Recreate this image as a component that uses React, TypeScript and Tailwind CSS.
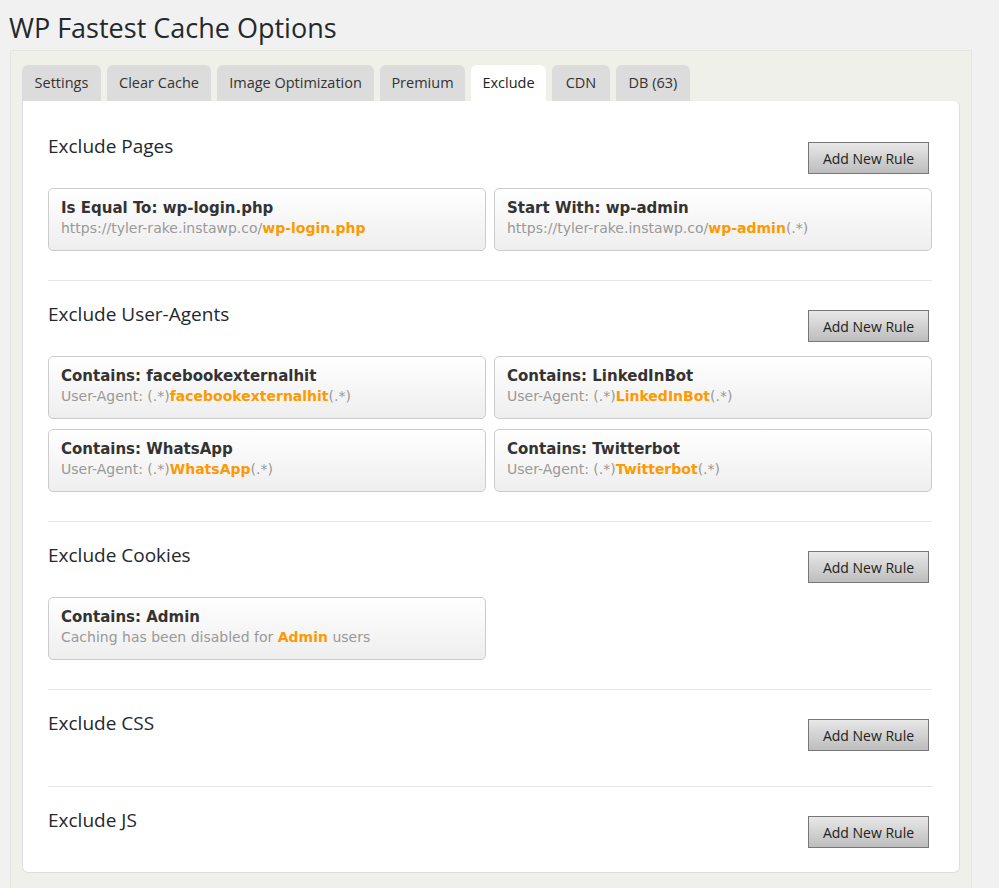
import React from "react";

type Rule = { title: string; prefix: string; value: string; suffix: string };

const tabs = [
  { label: "Settings", w: "w-[79px]" },
  { label: "Clear Cache", w: "w-[104px]" },
  { label: "Image Optimization", w: "w-[157px]" },
  { label: "Premium", w: "w-[85px]" },
  { label: "Exclude", w: "w-[75px]", active: true },
  { label: "CDN", w: "w-[58px]" },
  { label: "DB (63)", w: "w-[74px]" },
];

const sections: { title: string; rules: Rule[] }[] = [
  {
    title: "Exclude Pages",
    rules: [
      { title: "Is Equal To: wp-login.php", prefix: "https://tyler-rake.instawp.co/", value: "wp-login.php", suffix: "" },
      { title: "Start With: wp-admin", prefix: "https://tyler-rake.instawp.co/", value: "wp-admin", suffix: "(.*)" },
    ],
  },
  {
    title: "Exclude User-Agents",
    rules: [
      { title: "Contains: facebookexternalhit", prefix: "User-Agent: (.*)", value: "facebookexternalhit", suffix: "(.*)" },
      { title: "Contains: LinkedInBot", prefix: "User-Agent: (.*)", value: "LinkedInBot", suffix: "(.*)" },
      { title: "Contains: WhatsApp", prefix: "User-Agent: (.*)", value: "WhatsApp", suffix: "(.*)" },
      { title: "Contains: Twitterbot", prefix: "User-Agent: (.*)", value: "Twitterbot", suffix: "(.*)" },
    ],
  },
  {
    title: "Exclude Cookies",
    rules: [
      { title: "Contains: Admin", prefix: "Caching has been disabled for ", value: "Admin", suffix: " users" },
    ],
  },
  { title: "Exclude CSS", rules: [] },
  { title: "Exclude JS", rules: [] },
];

function RuleCard({ rule }: { rule: Rule }) {
  return (
    <div className="h-[63px] rounded-[5px] border border-[#cccccc] bg-gradient-to-b from-white to-[#eeeeee] pl-[12px] pt-[9px] font-['DejaVu_Sans',Verdana,sans-serif]">
      <div className="text-[15px] leading-[20px] font-bold text-[#333333] whitespace-nowrap">{rule.title}</div>
      <div className="text-[14px] leading-[20px] text-[#999999] whitespace-nowrap">
        {rule.prefix}
        <span className="font-bold text-[#ff9900]">{rule.value}</span>
        {rule.suffix}
      </div>
    </div>
  );
}

export default function App() {
  return (
    <div className="min-h-[888px] bg-[#f1f1f1] font-['Open_Sans','Noto_Sans',sans-serif] text-[#23282d]">
      <h1 className="pl-[9px] pt-[9px] text-[27px] leading-[38px] text-[#23282d]">WP Fastest Cache Options</h1>
      <div className="ml-[10px] mt-[3px] w-[962px] border border-[#e6e6e0] bg-[#f0f0eb] pl-[11px] pr-[11px] pt-[14px] pb-[15px]">
        <div className="flex gap-[6px]">
          {tabs.map((t) => (
            <div
              key={t.label}
              className={`${t.w} flex h-[36px] items-center justify-center rounded-t-[6px] text-[14.5px] ${
                t.active ? "bg-white text-[#222222]" : "bg-[#dcdcdc] text-[#333333]"
              }`}
            >
              {t.label}
            </div>
          ))}
        </div>
        <div className="rounded-b-[6px] rounded-tr-[6px] border border-[#dddddd] border-t-0 bg-white pl-[25px] pr-[27px] pt-[33px] pb-[24px]">
          {sections.map((s, i) => (
            <div key={s.title} className={i > 0 ? "border-t border-[#e5e5e5] pt-[21px]" : ""}>
              <div className="flex items-start justify-between">
                <h2 className="text-[19px] leading-[24px] font-medium text-[#23282d]">{s.title}</h2>
                <button className="mr-[3px] mt-[8px] h-[32px] w-[121px] border border-[#777777] bg-gradient-to-b from-[#e8e8e8] to-[#bdbdbd] text-[14px] text-[#222222]">
                  Add New Rule
                </button>
              </div>
              {s.rules.length > 0 ? (
                <div className="mt-[14px] grid grid-cols-2 gap-x-[8px] gap-y-[10px] pb-[29px]">
                  {s.rules.map((r) => (
                    <RuleCard key={r.title} rule={r} />
                  ))}
                </div>
              ) : (
                <div className={i === sections.length - 1 ? "" : "h-[35px]"} />
              )}
            </div>
          ))}
        </div>
      </div>
    </div>
  );
}
